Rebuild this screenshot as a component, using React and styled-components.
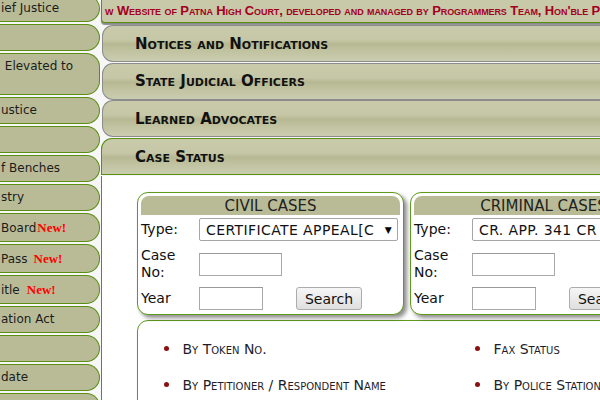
import React from "react";
import styled, { createGlobalStyle } from "styled-components";

const GlobalStyle = createGlobalStyle`
  html, body {
    margin: 0;
    padding: 0;
  }
  body {
    width: 600px;
    height: 400px;
    overflow: hidden;
    background: #f7f7f7;
    font-family: "DejaVu Sans", Verdana, sans-serif;
  }
`;

const GREEN = "#5b8f14";

const Page = styled.div`
  display: flex;
  align-items: flex-start;
  width: 900px;
  height: 400px;
`;

const Sidebar = styled.nav`
  flex: none;
  width: 100px;
  display: flex;
  flex-direction: column;
  gap: 2px;
  margin-top: -5px;
`;

const NavItem = styled.div`
  box-sizing: border-box;
  padding: ${(p) => (p.$tall ? "6px" : "5px")} 10px ${(p) => (p.$tall ? "6px" : "5px")} 1px;
  height: ${(p) => (p.$tall ? "29px" : "auto")};
  min-height: 27px;
  background: #b9bb97;
  border: 1px solid ${GREEN};
  border-left: none;
  border-radius: 0 14px 14px 0;
  font-size: 12px;
  line-height: 15px;
  color: #1c1c1c;
  white-space: pre;
`;

const NewTag = styled.span`
  margin-left: ${(p) => p.$gap}px;
  font-family: "Liberation Serif", "Times New Roman", serif;
  font-weight: bold;
  font-size: 13px;
  line-height: 15px;
  color: #ff0000;
`;

const Main = styled.main`
  flex: 1;
  display: flex;
  flex-direction: column;
  margin-left: 1px;
`;

const Marquee = styled.div`
  flex: none;
  box-sizing: border-box;
  height: 23px;
  padding-left: 3px;
  background: #c7c9a9;
  border-left: 1px solid ${GREEN};
  border-bottom: 1px solid ${GREEN};
  border-bottom-left-radius: 4px;
  box-shadow: 0 2px 1px #8a8a8a;
  font-family: "Liberation Sans", Arial, sans-serif;
  font-weight: bold;
  font-size: 13px;
  letter-spacing: -0.1px;
  font-variant: small-caps;
  line-height: 22px;
  color: #a3001e;
  white-space: nowrap;
  overflow: hidden;
`;

const Accordion = styled.div`
  display: flex;
  flex-direction: column;
  gap: 0.7px;
  margin-top: 2px;
`;

const AccordionHeader = styled.div`
  flex: none;
  box-sizing: border-box;
  height: 37px;
  margin-left: ${(p) => (p.$active ? 0 : 1)}px;
  padding-left: ${(p) => (p.$active ? 33 : 32)}px;
  display: flex;
  align-items: center;
  border: 1px solid ${(p) => (p.$active ? GREEN : "#8c8c8c")};
  border-right: none;
  border-radius: ${(p) => (p.$active ? "11px 0 0 0" : "11px 0 0 11px")};
  background: linear-gradient(
    to bottom,
    #c8caab 0%,
    #c5c7a6 40%,
    #b7b893 52%,
    #bfc19e 68%,
    #cacdb0 100%
  );
  font-weight: bold;
  font-size: 15px;
  font-variant: small-caps;
  color: #111;
`;

const CasePanel = styled.section`
  flex: none;
  height: 260px;
  background: #fff;
  border-left: 1px solid ${GREEN};
  padding: 16px 0 0 35px;
`;

const CardsRow = styled.div`
  display: flex;
  gap: 6px;
`;

const CaseCard = styled.div`
  box-sizing: border-box;
  flex: none;
  width: 267px;
  padding: 3px 3px 2px;
  background: #fff;
  border: 1.5px solid #5e9a1c;
  border-radius: 11px;
  box-shadow: 3px 3px 4px rgba(0, 0, 0, 0.45);
`;

const CardTitle = styled.div`
  height: 19px;
  background: #b9bb96;
  border-radius: 8px 8px 0 0;
  text-align: center;
  font-size: 15px;
  line-height: 20px;
  color: #222;
`;

const FormGrid = styled.div`
  display: grid;
  grid-template-columns: 58px 1fr;
  row-gap: 6px;
  align-items: center;
  margin-top: 3.5px;
  padding-bottom: 2px;
`;

const Label = styled.div`
  font-size: 14px;
  line-height: 17px;
  color: #111;
`;

const SelectBox = styled.div`
  box-sizing: border-box;
  width: 199px;
  height: 23px;
  display: flex;
  align-items: center;
  padding: 0 5px 0 6px;
  border: 1px solid #a6a6a6;
  border-radius: 2px;
  background: #fff;
  font-size: 14px;
  letter-spacing: 0.4px;
  color: #111;
`;

const SelectText = styled.span`
  flex: 1;
  overflow: hidden;
  white-space: nowrap;
`;

const SelectArrow = styled.span`
  font-size: 9px;
  margin-left: 4px;
  color: #000;
`;

const FieldRow = styled.div`
  display: flex;
  align-items: center;
  gap: 33px;
`;

const TextInput = styled.input`
  box-sizing: border-box;
  width: ${(p) => p.$w}px;
  height: 23px;
  margin: 0;
  padding: 0 3px;
  border: 1px solid #a9a9a9;
  border-top-color: #999;
  background: #fff;
  font-size: 14px;
`;

const SearchButton = styled.button`
  box-sizing: border-box;
  width: 66px;
  height: 23px;
  padding: 0;
  border: 1px solid #acacac;
  border-radius: 3px;
  background: linear-gradient(to bottom, #f6f6f6, #dfdfdf);
  font-family: "DejaVu Sans", Verdana, sans-serif;
  font-size: 14px;
  color: #111;
`;

const LinkCard = styled.div`
  box-sizing: border-box;
  width: 700px;
  height: 120px;
  margin-top: 4.5px;
  padding: 19px 0 0 26px;
  background: #fff;
  border: 1.5px solid #5e9a1c;
  border-radius: 11px 0 0 0;
  box-shadow: 3px 3px 4px rgba(0, 0, 0, 0.35);
`;

const LinkList = styled.ul`
  display: grid;
  grid-template-columns: 311px 311px;
  row-gap: 18px;
  margin: 0;
  padding: 0;
  list-style: none;
`;

const LinkItem = styled.li`
  display: flex;
  align-items: center;
  gap: 13.5px;
  font-size: 14px;
  font-variant: small-caps;
  line-height: 18px;
  color: #1d1d2b;
  white-space: nowrap;

  &::before {
    content: "";
    flex: none;
    width: 5px;
    height: 5px;
    border-radius: 50%;
    background: #8b1111;
  }
`;

const navItems = [
  { text: "ief Justice" },
  { text: "" },
  { text: " Elevated to\n " },
  { text: "ustice" },
  { text: "" },
  { text: "f Benches" },
  { text: "stry" },
  { text: "Board", isNew: true, gap: 1 },
  { text: "Pass", isNew: true, gap: 6 },
  { text: "itle", isNew: true, gap: 7 },
  { text: "ation Act" },
  { text: "" },
  { text: "date" },
  { text: "" },
];

const sections = [
  "Notices and Notifications",
  "State Judicial Officers",
  "Learned Advocates",
];

const cases = [
  { title: "CIVIL CASES", type: "CERTIFICATE APPEAL[C" },
  { title: "CRIMINAL CASES", type: "CR. APP. 341 CR" },
];

const links = [
  "By Token No.",
  "Fax Status",
  "By Petitioner / Respondent Name",
  "By Police Station",
];

function CaseForm({ title, type }) {
  return (
    <CaseCard>
      <CardTitle>{title}</CardTitle>
      <FormGrid>
        <Label>Type:</Label>
        <SelectBox>
          <SelectText>{type}</SelectText>
          <SelectArrow>▼</SelectArrow>
        </SelectBox>
        <Label>Case No:</Label>
        <div>
          <TextInput $w={83} type="text" />
        </div>
        <Label>Year</Label>
        <FieldRow>
          <TextInput $w={64} type="text" />
          <SearchButton type="button">Search</SearchButton>
        </FieldRow>
      </FormGrid>
    </CaseCard>
  );
}

export default function App() {
  return (
    <>
      <GlobalStyle />
      <Page>
        <Sidebar>
          {navItems.map((item, i) => (
            <NavItem key={i} $tall={item.isNew}>
              {item.text}
              {item.isNew && <NewTag $gap={item.gap}>New!</NewTag>}
            </NavItem>
          ))}
        </Sidebar>
        <Main>
          <Marquee>
            w Website of Patna High Court, developed and managed by Programmers
            Team, Hon'ble Patna High Court
          </Marquee>
          <Accordion>
            {sections.map((s) => (
              <AccordionHeader key={s}>{s}</AccordionHeader>
            ))}
            <AccordionHeader $active>Case Status</AccordionHeader>
            <CasePanel>
              <CardsRow>
                {cases.map((c) => (
                  <CaseForm key={c.title} {...c} />
                ))}
              </CardsRow>
              <LinkCard>
                <LinkList>
                  {links.map((l) => (
                    <LinkItem key={l}>{l}</LinkItem>
                  ))}
                </LinkList>
              </LinkCard>
            </CasePanel>
          </Accordion>
        </Main>
      </Page>
    </>
  );
}
